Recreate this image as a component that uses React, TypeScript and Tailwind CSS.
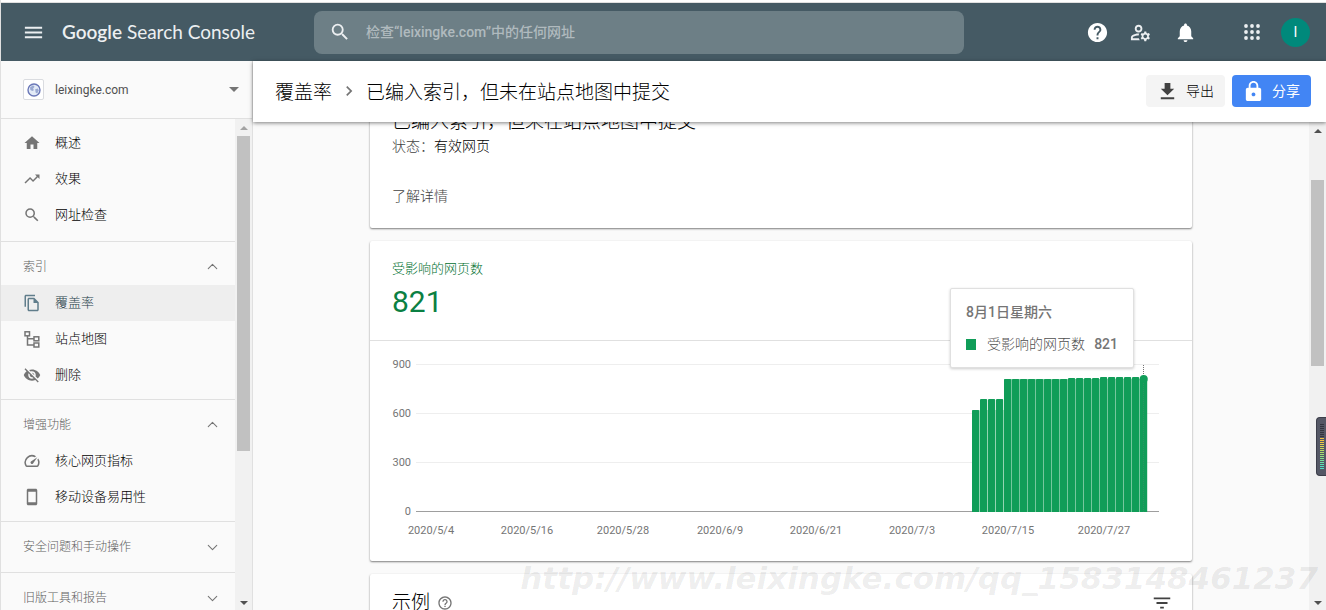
import type { ComponentType, ReactNode } from 'react';
import { ChevronDown, ChevronUp } from 'lucide-react';
import {
  MdFilterList,
  MdGetApp,
  MdHelp,
  MdHelpOutline,
  MdHome,
  MdKeyboardArrowRight,
  MdLock,
  MdMenu,
  MdNotifications,
  MdOutlineFileCopy,
  MdOutlineManageAccounts,
  MdOutlineSpeed,
  MdSearch,
  MdStayCurrentPortrait,
  MdTrendingUp,
  MdVisibilityOff,
} from 'react-icons/md';

type IconType = ComponentType<{ size?: number; className?: string }>;

function SitemapIcon({ size = 18, className }: { size?: number; className?: string }) {
  return (
    <svg width={size} height={size} viewBox="0 0 18 18" fill="none" stroke="currentColor" strokeWidth="1.5" className={className}>
      <rect x="2" y="1.8" width="4.5" height="4" />
      <rect x="11" y="6.8" width="4.8" height="4" />
      <rect x="11" y="13" width="4.8" height="4" />
      <path d="M4.5 6v9H11M4.5 8.8H11" />
    </svg>
  );
}

function AppsIcon() {
  return (
    <svg width="16" height="16" viewBox="0 0 16 16" fill="currentColor">
      {[2, 8, 14].map((y) => [2, 8, 14].map((x) => <circle key={`${x}-${y}`} cx={x} cy={y} r="1.9" />))}
    </svg>
  );
}

function GlobeIcon() {
  return (
    <svg width="14" height="14" viewBox="0 0 14 14">
      <circle cx="7" cy="7" r="6" fill="#e3ebf7" stroke="#6b78b8" strokeWidth="1.4" />
      <path d="M3 4.5 6 2.2l1.6 1.6-1.5 1.7.8 1.8-1.6.6L3.4 7zM8.2 6.2l2.6-.8 1 2-1.6 3.2-1.6-1.2z" fill="#9aa9d2" />
    </svg>
  );
}

interface NavItem {
  label: string;
  icon: IconType;
  active?: boolean;
}

const overview: NavItem[] = [
  { label: '概述', icon: MdHome },
  { label: '效果', icon: MdTrendingUp },
  { label: '网址检查', icon: MdSearch },
];

const groups: { title: string; items: NavItem[] }[] = [
  {
    title: '索引',
    items: [
      { label: '覆盖率', icon: MdOutlineFileCopy, active: true },
      { label: '站点地图', icon: SitemapIcon },
      { label: '删除', icon: MdVisibilityOff },
    ],
  },
  {
    title: '增强功能',
    items: [
      { label: '核心网页指标', icon: MdOutlineSpeed },
      { label: '移动设备易用性', icon: MdStayCurrentPortrait },
    ],
  },
];

const collapsed = ['安全问题和手动操作', '旧版工具和报告'];

function NavLink({ label, icon: Icon, active }: NavItem) {
  return (
    <a
      href="#"
      className={`flex h-9 items-center gap-[14px] pl-[22px] text-[13px] ${
        active ? 'bg-[#eeeeee] text-[#263f4a]' : 'text-black'
      }`}
    >
      <Icon size={18} className={active ? 'text-[#607d8b]' : 'text-[#757575]'} />
      {label}
    </a>
  );
}

function Scrollbar({ offset, thumb, dim }: { offset: string; thumb: string; dim?: boolean }) {
  return (
    <div className="flex w-[17px] shrink-0 flex-col items-center bg-[#f1f1f1]">
      <div className={`flex shrink-0 ${offset}`}>
        <svg width="8" height="4" viewBox="0 0 8 4" fill={dim ? '#a3a3a3' : '#505050'}>
          <path d="M0 4 4 0l4 4z" />
        </svg>
      </div>
      <div className={`w-[13px] shrink-0 bg-[#c1c1c1] ${thumb}`} />
      <svg width="8" height="4" viewBox="0 0 8 4" fill="#505050" className="mt-auto mb-[5px] shrink-0">
        <path d="M0 0h8L4 4z" />
      </svg>
    </div>
  );
}

function Sidebar() {
  return (
    <aside className="flex w-[252px] shrink-0 flex-col border-r border-[#e0e0e0] bg-[#fafafa]">
      <button type="button" className="flex h-[58px] shrink-0 items-center border-b border-[#e0e0e0] pr-[13px] pl-[22px]">
        <span className="flex h-[21px] w-[21px] items-center justify-center rounded-xs border border-[#dadce0] bg-white">
          <GlobeIcon />
        </span>
        <span className="ml-[11px] text-xs font-normal text-[#505050]">leixingke.com</span>
        <svg width="10" height="5" viewBox="0 0 10 5" fill="#757575" className="ml-auto">
          <path d="M0 0h10L5 5z" />
        </svg>
      </button>
      <div className="flex min-h-0 flex-1">
        <nav className="flex-1 overflow-hidden">
          <div className="pt-[6px] pb-2">
            {overview.map((item) => (
              <NavLink key={item.label} {...item} />
            ))}
          </div>
          {groups.map((group) => (
            <div key={group.title} className="border-t border-[#e0e0e0] pb-[6px]">
              <button
                type="button"
                className="flex h-[43px] w-full items-center justify-between pt-[6px] pr-[14px] pl-[22px] text-xs text-[#616161]"
              >
                {group.title}
                <ChevronUp size={17} strokeWidth={1.5} className="text-[#757575]" />
              </button>
              {group.items.map((item) => (
                <NavLink key={item.label} {...item} />
              ))}
            </div>
          ))}
          {collapsed.map((title) => (
            <button
              key={title}
              type="button"
              className="flex h-[51px] w-full items-center justify-between border-t border-[#e0e0e0] pr-[14px] pl-[22px] text-xs text-[#616161]"
            >
              {title}
              <ChevronDown size={17} strokeWidth={1.5} className="text-[#757575]" />
            </button>
          ))}
        </nav>
        <Scrollbar offset="h-[17px] items-center" thumb="h-[315px]" dim />
      </div>
    </aside>
  );
}

function TopBar() {
  return (
    <header className="flex h-[58px] shrink-0 items-center bg-[#455a64] text-[#eceff1]">
      <button type="button" aria-label="Menu" className="ml-[21px]">
        <MdMenu size={23} />
      </button>
      <a href="#" className="ml-[17px] w-[252px] font-[Lato,sans-serif] text-[19px] font-normal whitespace-nowrap">
        <span className="font-semibold">Google</span> Search Console
      </a>
      <label className="flex h-[43px] w-[650px] items-center rounded-lg bg-[#6d7f86] pl-[15px]">
        <MdSearch size={22} className="shrink-0" />
        <input
          type="text"
          aria-label="Search"
          placeholder="检查“leixingke.com”中的任何网址"
          className="ml-[15px] w-full bg-transparent text-sm font-medium outline-none placeholder:text-[#b0babe]"
        />
      </label>
      <div className="mr-4 ml-auto flex items-center">
        <button type="button" aria-label="Help" className="text-white">
          <MdHelp size={23} />
        </button>
        <button type="button" aria-label="Users" className="ml-5">
          <MdOutlineManageAccounts size={23} />
        </button>
        <button type="button" aria-label="Notifications" className="ml-[22px] text-white">
          <MdNotifications size={23} />
        </button>
        <button type="button" aria-label="Apps" className="ml-[47px]">
          <AppsIcon />
        </button>
        <button type="button" className="ml-[21px] h-[29px] w-[29px] rounded-full bg-[#00897b] text-sm font-normal text-white">
          I
        </button>
      </div>
    </header>
  );
}

function PageHeader() {
  return (
    <div className="relative z-10 flex h-[61px] shrink-0 items-center bg-white pr-[15px] pb-px pl-[22px] text-black shadow-[0_1px_4px_rgba(0,0,0,0.5)]">
      <div className="flex items-center pt-1 text-[19px]">
        <a href="#">覆盖率</a>
        <MdKeyboardArrowRight size={20} className="mx-[7px] mb-1 text-[#757575]" />
        <h1>已编入索引，但未在站点地图中提交</h1>
      </div>
      <div className="ml-auto flex gap-[7px] text-sm">
        <button type="button" className="flex h-8 items-center gap-[7px] rounded-sm bg-[#f4f4f4] pr-[11px] pl-[10px]">
          <MdGetApp size={23} className="text-[#424242]" />
          导出
        </button>
        <button type="button" className="flex h-8 items-center gap-[7px] rounded-sm bg-[#4285f4] pr-[11px] pl-[10px] font-normal text-white">
          <MdLock size={23} />
          分享
        </button>
      </div>
    </div>
  );
}

function Card({ children, className = '' }: { children: ReactNode; className?: string }) {
  return (
    <section className={`relative shrink-0 rounded-xs bg-white shadow-[0_1px_2px_rgba(0,0,0,0.5)] ${className}`}>{children}</section>
  );
}

// distance of each bar's top from the top of the plot
const barTops = [69, 58, 58, 58, 38, 38, 38, 38, 38, 38, 38, 38, 37, 37, 37, 37, 36, 36, 36, 36, 36, 36];
const dates = ['2020/5/4', '2020/5/16', '2020/5/28', '2020/6/9', '2020/6/21', '2020/7/3', '2020/7/15', '2020/7/27'];
const dateX = [61, 157, 253, 350, 446, 542, 638, 734];

function Chart() {
  return (
    <svg viewBox="0 0 822 220" className="block w-full" fontSize="11" fill="#757575" fontWeight="400">
      {[900, 600, 300, 0].map((value, i) => (
        <g key={value}>
          <line x1="46" x2="789" y1={23.5 + i * 49} y2={23.5 + i * 49} stroke={value ? '#eeeeee' : '#9e9e9e'} />
          <text x="41" y={27 + i * 49} textAnchor="end">
            {value}
          </text>
        </g>
      ))}
      <rect x="602" y="69" width="32" height="102" fill="#b4e3ca" />
      <rect x="634" y="38" width="143" height="133" fill="#8fd3b0" />
      <rect x="602" y="57" width="8" height="12" fill="#fff" />
      {barTops.map((top, i) => (
        <path key={i} d={`M${602 + i * 8} 171V${top + 1}q0-1 1-1h5.2q1 0 1 1V171z`} fill="#109d58" />
      ))}
      <line x1="773.5" x2="773.5" y1="24" y2="171" stroke="#757575" strokeDasharray="1 1" />
      <path d="M770 171V37h7v134z" fill="#109d58" opacity="0.7" />
      <circle cx="773.7" cy="38" r="4" fill="#109d58" />
      {dates.map((date, i) => (
        <text key={date} x={dateX[i]} y="193" textAnchor="middle">
          {date}
        </text>
      ))}
    </svg>
  );
}

function ChartTooltip() {
  return (
    <div className="absolute top-[47px] right-[58px] w-[184px] rounded-xs border border-[#e0e0e0] bg-white px-[15px] pt-[13px] pb-[13px] text-sm leading-5 text-[#757575] shadow-[0_1px_3px_rgba(0,0,0,0.2)]">
      <p className="font-medium">8月1日星期六</p>
      <p className="mt-3 flex items-center">
        <span className="mr-[11px] h-[11px] w-[10px] bg-[#109d58]" />
        <span className="text-[#505050]">受影响的网页数</span>
        <span className="ml-auto font-medium">821</span>
      </p>
    </div>
  );
}

const meter = [
  ...Array(7).fill('#33353f'),
  '#f2c23e', '#f2c23e', '#ecc944', '#e2d04c', '#d5d553', '#c8d85b', '#bbdb63', '#addd6c',
  '#a0df76', '#92e081', '#84e18d', '#76e29a', '#68e2a7', '#5ae2b4', '#4fe1bf', '#4fe1c4',
];

function LevelWidget() {
  return (
    <div className="absolute top-[417px] right-0 z-20 h-[59px] w-[10px] rounded-l-sm border border-r-0 border-[#3c3e4a] bg-[#555866]">
      <svg width="4" height="46" viewBox="0 0 4 46" className="mt-[6px] ml-[3px]">
        {meter.map((color, i) => (
          <rect key={i} y={i * 2} width="4" height="1" fill={color} />
        ))}
      </svg>
    </div>
  );
}

export default function App() {
  return (
    <div className="relative flex h-screen flex-col overflow-hidden border-l border-[#e0e0e0] bg-[#fafafa] font-[Roboto,'Noto_Sans_CJK_SC',sans-serif] font-light">
      <div className="h-[3px] shrink-0 border-b border-[#e0e0e0] bg-white" />
      <TopBar />
      <div className="flex min-h-0 flex-1">
        <Sidebar />
        <main className="flex min-w-0 flex-1 flex-col">
          <PageHeader />
          <div className="flex min-h-0 flex-1">
            <div className="min-w-0 flex-1 overflow-hidden">
              <div className="mx-auto -mt-[12px] flex max-w-[822px] flex-col gap-[13px]">
                <Card className="px-[22px] pb-[22px] text-sm leading-5 text-[#424242]">
                  <h2 className="mb-[2px] text-[19px] leading-6 text-black">已编入索引，但未在站点地图中提交</h2>
                  <p>
                    状态：<span className="text-black">有效网页</span>
                  </p>
                  <a href="#" className="mt-[30px] block">
                    了解详情
                  </a>
                </Card>
                <Card>
                  <div className="h-[100px] border-b border-[#e0e0e0] px-[22px] pt-[18px] text-[#0b8043]">
                    <p className="text-[13px] leading-5 text-[#00702f]">受影响的网页数</p>
                    <p className="mt-[5px] text-[30px] leading-9 font-normal">821</p>
                  </div>
                  <Chart />
                  <ChartTooltip />
                </Card>
                <Card className="flex h-[80px] justify-between px-[22px] pt-[17px] text-black">
                  <h2 className="flex h-6 items-center gap-[7px] text-[19px]">
                    示例
                    <MdHelpOutline size={16} className="text-[#757575]" />
                  </h2>
                  <button type="button" aria-label="Filter" className="-mr-[3px] h-6 text-[#424242]">
                    <MdFilterList size={22} />
                  </button>
                </Card>
              </div>
            </div>
            <Scrollbar offset="h-[58px] items-start pt-[7px]" thumb="h-[186px]" />
          </div>
        </main>
      </div>
      <LevelWidget />
      <p className="pointer-events-none absolute right-2 bottom-[12px] z-10 font-['DejaVu_Sans',sans-serif] text-[31px] leading-10 font-bold whitespace-nowrap text-black/8 italic">
        http://www.leixingke.com/qq_1583148461237
      </p>
    </div>
  );
}
